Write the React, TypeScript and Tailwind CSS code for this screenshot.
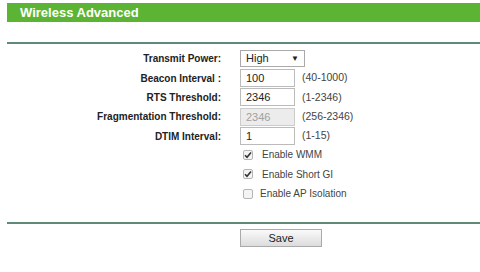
const rows = [
  { label: 'Beacon Interval :', value: '100', hint: '(40-1000)', disabled: false },
  { label: 'RTS Threshold:', value: '2346', hint: '(1-2346)', disabled: false },
  { label: 'Fragmentation Threshold:', value: '2346', hint: '(256-2346)', disabled: true },
  { label: 'DTIM Interval:', value: '1', hint: '(1-15)', disabled: false },
];

const checks = [
  { label: 'Enable WMM', checked: true },
  { label: 'Enable Short GI', checked: true },
  { label: 'Enable AP Isolation', checked: false },
];

function Check({ checked }: { checked: boolean }) {
  return (
    <span className="w-[10px] h-[10px] border border-[#b5b5b5] bg-[#f4f4f4] rounded-[2px] flex items-center justify-center">
      {checked && (
        <svg width="8" height="8" viewBox="0 0 8 8">
          <path d="M1 4.2 L3 6.2 L7 1.5" stroke="#333" strokeWidth="1.6" fill="none" />
        </svg>
      )}
    </span>
  );
}

export default function App() {
  return (
    <div className="w-[480px] h-[272px] bg-white overflow-hidden font-['Liberation_Sans',Arial,sans-serif] pt-[3px] pl-[7px]">
      <div className="h-[19px] bg-[#5cb434] flex items-center pl-[13px]">
        <span className="text-white font-bold text-[13px]">Wireless Advanced</span>
      </div>
      <div className="mt-[20px] h-[2px] bg-[#5e8a77]" />

      <div className="mt-[5px] grid grid-cols-[214px_1fr] gap-x-[19px] text-[10px] text-[#222]">
        <div className="h-[19.4px] flex items-center justify-end font-bold">Transmit Power:</div>
        <div className="h-[19.4px] flex items-center">
          <div className="w-[65px] h-[17px] border border-[#aaa] bg-white flex items-center justify-between px-[5px] text-[11px]">
            <span>High</span>
            <span className="text-[8px]">▼</span>
          </div>
        </div>
        {rows.map((r) => (
          <>
            <div key={r.label} className="h-[19.4px] flex items-center justify-end font-bold">{r.label}</div>
            <div className="h-[19.4px] flex items-center">
              <div
                className={
                  r.disabled
                    ? 'w-[55px] h-[18px] border border-[#ccc] bg-[#ececec] text-[#a0a0a0] flex items-center px-[5px] text-[11px]'
                    : 'w-[55px] h-[18px] border border-[#bbb] bg-white flex items-center px-[5px] text-[11px]'
                }
              >
                {r.value}
              </div>
              <span className="ml-[7px] text-[10.5px] text-[#444]">{r.hint}</span>
            </div>
          </>
        ))}
      </div>

      <div className="-mt-[1px] ml-[236px] flex flex-col text-[10px] text-[#444]">
        {checks.map((c) => (
          <div key={c.label} className="h-[19.5px] flex items-center">
            <Check checked={c.checked} />
            <span className={c.checked ? 'ml-[9px]' : 'ml-[7px]'}>{c.label}</span>
          </div>
        ))}
      </div>

      <div className="mt-[19px] h-[2px] bg-[#5e8a77]" />

      <div className="mt-[5px] ml-[233px]">
        <button className="w-[82px] h-[18px] border border-[#aaa] bg-gradient-to-b from-[#fafafa] to-[#dcdcdc] text-[11px] text-[#222] flex items-center justify-center">
          Save
        </button>
      </div>
    </div>
  );
}
